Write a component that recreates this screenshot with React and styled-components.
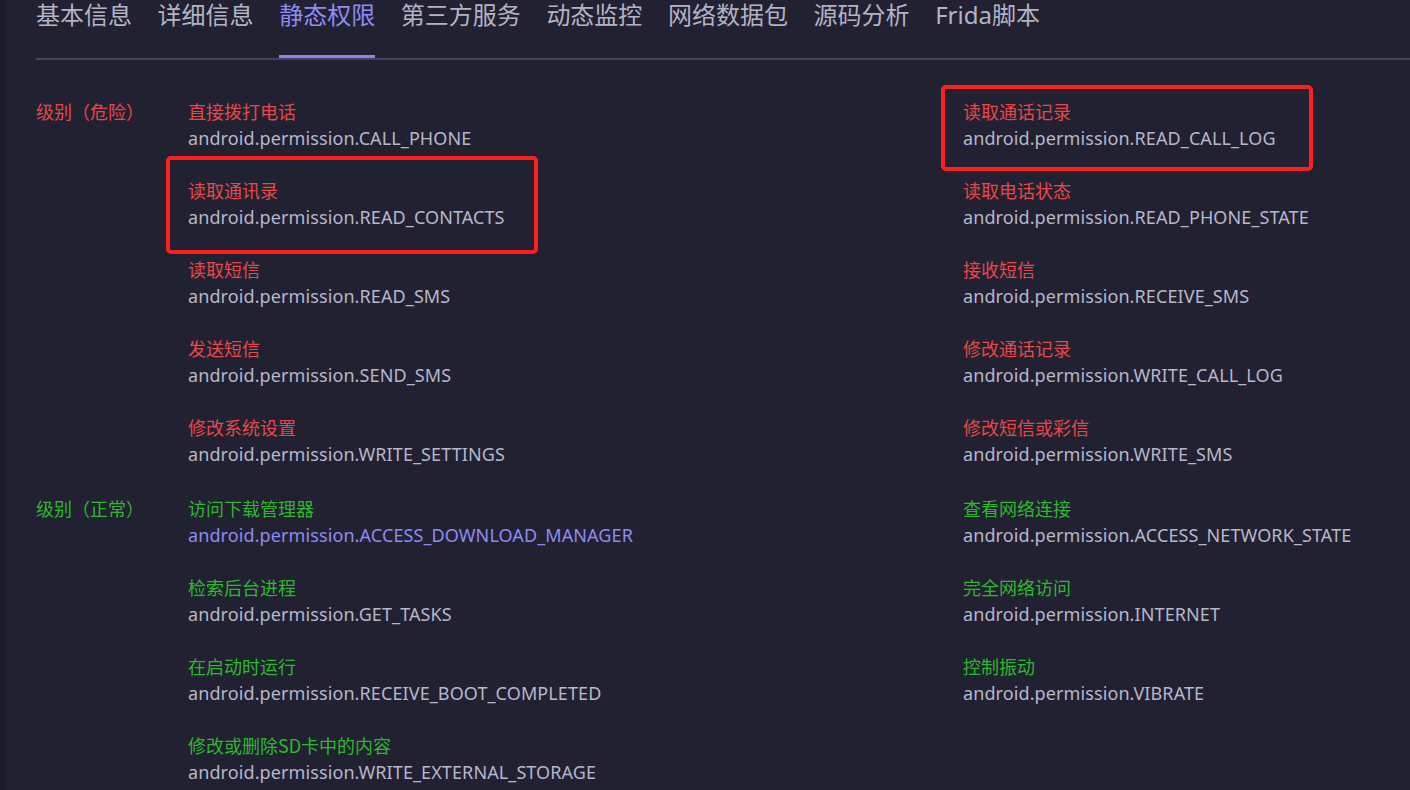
import React from 'react';
import styled, { createGlobalStyle } from 'styled-components';

const GlobalStyle = createGlobalStyle`
  html, body {
    margin: 0;
    padding: 0;
    background: #222132;
  }
  body {
    font-family: "Noto Sans", "Noto Sans CJK SC", sans-serif;
    overflow: hidden;
  }
`;

// page frame with the darker strip on the left
const Page = styled.div`
  display: flex;
  width: 1410px;
  height: 790px;
  background: #222132;
`;

const SideStrip = styled.div`
  width: 6px;
  flex: none;
  background: #1b1a28;
`;

const Main = styled.div`
  flex: 1;
  padding-left: 30px;
  min-width: 0;
`;

const TabBar = styled.div`
  display: flex;
  gap: 25.6px;
  height: 58px;
  border-bottom: 2px solid #45445a;
`;

const Tab = styled.div`
  font-family: "Noto Sans", "Noto Sans CJK SC", sans-serif;
  font-size: 24px;
  line-height: 30px;
  height: 58px;
  box-sizing: border-box;
  color: ${p => (p.$active ? '#8c8cf5' : '#b3b4c3')};
  border-bottom: ${p => (p.$active ? '3px solid #8586f0' : 'none')};
  margin-bottom: ${p => (p.$active ? '-1px' : '0')};
  white-space: nowrap;
`;

const Content = styled.div`
  padding-top: 38px;
`;

const Group = styled.div`
  display: grid;
  grid-template-columns: 152px 775px 1fr;
  margin-bottom: 2px;
`;

const Level = styled.div`
  font-family: "Noto Sans CJK SC", sans-serif;
  font-size: 18px;
  line-height: 27px;
  color: ${p => p.$color};
`;

const Column = styled.div`
  display: flex;
  flex-direction: column;
  gap: 25px;
  padding-bottom: 25px;
`;

const Item = styled.div`
  position: relative;

  ${p =>
    p.$mark &&
    `
    &::after {
      content: '';
      position: absolute;
      left: ${p.$mark.left}px;
      top: ${p.$mark.top}px;
      width: 372px;
      height: ${p.$mark.height}px;
      box-sizing: border-box;
      border: 4px solid #ff1f1a;
      border-radius: 5px;
      pointer-events: none;
    }
  `}
`;

const Title = styled.div`
  font-family: "Noto Sans CJK SC", sans-serif;
  font-size: 18px;
  line-height: 27px;
  color: ${p => p.$color};
`;

const Name = styled.div`
  font-family: "Noto Sans", "Noto Sans CJK SC", sans-serif;
  font-size: 18px;
  letter-spacing: 0.1px;
  line-height: 27px;
  color: ${p => (p.$accent ? '#8b8cf2' : '#b6b7c9')};
  white-space: nowrap;
`;

const RED = '#e6484a';
const GREEN = '#2eb72e';

const tabs = ['基本信息', '详细信息', '静态权限', '第三方服务', '动态监控', '网络数据包', '源码分析', 'Frida脚本'];

const groups = [
  {
    level: '级别（危险）',
    color: RED,
    left: [
      { title: '直接拨打电话', name: 'android.permission.CALL_PHONE' },
      { title: '读取通讯录', name: 'android.permission.READ_CONTACTS', mark: { left: -22, top: -21, height: 98 } },
      { title: '读取短信', name: 'android.permission.READ_SMS' },
      { title: '发送短信', name: 'android.permission.SEND_SMS' },
      { title: '修改系统设置', name: 'android.permission.WRITE_SETTINGS' },
    ],
    right: [
      { title: '读取通话记录', name: 'android.permission.READ_CALL_LOG', mark: { left: -22, top: -13, height: 86 } },
      { title: '读取电话状态', name: 'android.permission.READ_PHONE_STATE' },
      { title: '接收短信', name: 'android.permission.RECEIVE_SMS' },
      { title: '修改通话记录', name: 'android.permission.WRITE_CALL_LOG' },
      { title: '修改短信或彩信', name: 'android.permission.WRITE_SMS' },
    ],
  },
  {
    level: '级别（正常）',
    color: GREEN,
    left: [
      { title: '访问下载管理器', name: 'android.permission.ACCESS_DOWNLOAD_MANAGER', accent: true },
      { title: '检索后台进程', name: 'android.permission.GET_TASKS' },
      { title: '在启动时运行', name: 'android.permission.RECEIVE_BOOT_COMPLETED' },
      { title: '修改或删除SD卡中的内容', name: 'android.permission.WRITE_EXTERNAL_STORAGE' },
    ],
    right: [
      { title: '查看网络连接', name: 'android.permission.ACCESS_NETWORK_STATE' },
      { title: '完全网络访问', name: 'android.permission.INTERNET' },
      { title: '控制振动', name: 'android.permission.VIBRATE' },
    ],
  },
];

const PermissionList = ({ items, color }) => (
  <Column>
    {items.map(item => (
      <Item key={item.name} $mark={item.mark}>
        <Title $color={color}>{item.title}</Title>
        <Name $accent={item.accent}>{item.name}</Name>
      </Item>
    ))}
  </Column>
);

const App = () => {
  return (
    <Page>
      <GlobalStyle />
      <SideStrip />
      <Main>
        <TabBar>
          {tabs.map(t => (
            <Tab key={t} $active={t === '静态权限'}>
              {t}
            </Tab>
          ))}
        </TabBar>
        <Content>
          {groups.map(g => (
            <Group key={g.level}>
              <Level $color={g.color}>{g.level}</Level>
              <PermissionList items={g.left} color={g.color} />
              <PermissionList items={g.right} color={g.color} />
            </Group>
          ))}
        </Content>
      </Main>
    </Page>
  );
};

export default App;
